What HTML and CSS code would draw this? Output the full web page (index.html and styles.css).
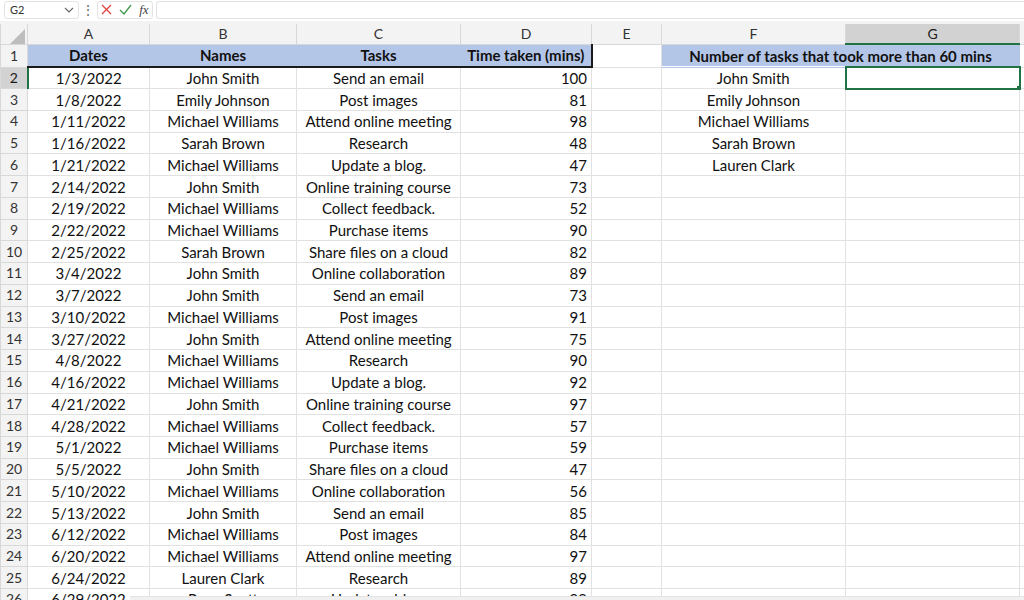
FILE: index.html
```html
<!DOCTYPE html>
<html lang="en">

<head>
    <meta charset="UTF-8" />
    <title>Task Log</title>
    <link rel="stylesheet" href="styles.css">
</head>

<body>
    <div class="formula-bar">
        <div class="name-box">
            <span>G2</span>
            <svg width="10" height="6" viewBox="0 0 10 6"><path d="M1 1l4 4 4-4" fill="none" stroke="#666" stroke-width="1.1" /></svg>
        </div>
        <div class="dots">⋮</div>
        <div class="fx-tools">
            <svg width="11" height="11" viewBox="0 0 11 11"><path d="M1 1l9 9M10 1l-9 9" stroke="#e0443e" stroke-width="1.3" /></svg>
            <svg width="13" height="11" viewBox="0 0 13 11"><path d="M1 6l4 4 7-9" fill="none" stroke="#3c9a4e" stroke-width="1.3" /></svg>
            <span class="fx">fx</span>
        </div>
        <div class="formula-input"></div>
    </div>

    <div class="sheet">
        <table class="grid">
            <colgroup>
                <col class="c-rowhead">
                <col class="c-a">
                <col class="c-b">
                <col class="c-c">
                <col class="c-d">
                <col class="c-e">
                <col class="c-f">
                <col class="c-g">
                <col>
            </colgroup>
            <thead>
                <tr class="col-heads">
                    <th class="corner"><svg width="16" height="16" viewBox="0 0 16 16"><path d="M16 1v15H1z" fill="#bdbdbd" /></svg></th>
                    <th>A</th>
                    <th>B</th>
                    <th>C</th>
                    <th>D</th>
                    <th>E</th>
                    <th>F</th>
                    <th class="active-col">G</th>
                    <th></th>
                </tr>
            </thead>
            <tbody>
                <tr class="title-row">
                    <th>1</th>
                    <td class="fill bottom-edge">Dates</td>
                    <td class="fill bottom-edge">Names</td>
                    <td class="fill bottom-edge">Tasks</td>
                    <td class="fill bottom-edge right-edge">Time taken (mins)</td>
                    <td></td>
                    <td class="fill" colspan="2">Number of tasks that took more than 60 mins</td>
                    <td></td>
                </tr>
                <tr>
                    <th class="active-row">2</th>
                    <td>1/3/2022</td><td>John Smith</td><td>Send an email</td><td class="num">100</td>
                    <td></td><td>John Smith</td><td class="selected"><span class="handle"></span></td><td></td>
                </tr>
                <tr>
                    <th>3</th>
                    <td>1/8/2022</td><td>Emily Johnson</td><td>Post images</td><td class="num">81</td>
                    <td></td><td>Emily Johnson</td><td></td><td></td>
                </tr>
                <tr>
                    <th>4</th>
                    <td>1/11/2022</td><td>Michael Williams</td><td>Attend online meeting</td><td class="num">98</td>
                    <td></td><td>Michael Williams</td><td></td><td></td>
                </tr>
                <tr>
                    <th>5</th>
                    <td>1/16/2022</td><td>Sarah Brown</td><td>Research</td><td class="num">48</td>
                    <td></td><td>Sarah Brown</td><td></td><td></td>
                </tr>
                <tr>
                    <th>6</th>
                    <td>1/21/2022</td><td>Michael Williams</td><td>Update a blog.</td><td class="num">47</td>
                    <td></td><td>Lauren Clark</td><td></td><td></td>
                </tr>
                <tr>
                    <th>7</th>
                    <td>2/14/2022</td><td>John Smith</td><td>Online training course</td><td class="num">73</td>
                    <td></td><td></td><td></td><td></td>
                </tr>
                <tr>
                    <th>8</th>
                    <td>2/19/2022</td><td>Michael Williams</td><td>Collect feedback.</td><td class="num">52</td>
                    <td></td><td></td><td></td><td></td>
                </tr>
                <tr>
                    <th>9</th>
                    <td>2/22/2022</td><td>Michael Williams</td><td>Purchase items</td><td class="num">90</td>
                    <td></td><td></td><td></td><td></td>
                </tr>
                <tr>
                    <th>10</th>
                    <td>2/25/2022</td><td>Sarah Brown</td><td>Share files on a cloud</td><td class="num">82</td>
                    <td></td><td></td><td></td><td></td>
                </tr>
                <tr>
                    <th>11</th>
                    <td>3/4/2022</td><td>John Smith</td><td>Online collaboration</td><td class="num">89</td>
                    <td></td><td></td><td></td><td></td>
                </tr>
                <tr>
                    <th>12</th>
                    <td>3/7/2022</td><td>John Smith</td><td>Send an email</td><td class="num">73</td>
                    <td></td><td></td><td></td><td></td>
                </tr>
                <tr>
                    <th>13</th>
                    <td>3/10/2022</td><td>Michael Williams</td><td>Post images</td><td class="num">91</td>
                    <td></td><td></td><td></td><td></td>
                </tr>
                <tr>
                    <th>14</th>
                    <td>3/27/2022</td><td>John Smith</td><td>Attend online meeting</td><td class="num">75</td>
                    <td></td><td></td><td></td><td></td>
                </tr>
                <tr>
                    <th>15</th>
                    <td>4/8/2022</td><td>Michael Williams</td><td>Research</td><td class="num">90</td>
                    <td></td><td></td><td></td><td></td>
                </tr>
                <tr>
                    <th>16</th>
                    <td>4/16/2022</td><td>Michael Williams</td><td>Update a blog.</td><td class="num">92</td>
                    <td></td><td></td><td></td><td></td>
                </tr>
                <tr>
                    <th>17</th>
                    <td>4/21/2022</td><td>John Smith</td><td>Online training course</td><td class="num">97</td>
                    <td></td><td></td><td></td><td></td>
                </tr>
                <tr>
                    <th>18</th>
                    <td>4/28/2022</td><td>Michael Williams</td><td>Collect feedback.</td><td class="num">57</td>
                    <td></td><td></td><td></td><td></td>
                </tr>
                <tr>
                    <th>19</th>
                    <td>5/1/2022</td><td>Michael Williams</td><td>Purchase items</td><td class="num">59</td>
                    <td></td><td></td><td></td><td></td>
                </tr>
                <tr>
                    <th>20</th>
                    <td>5/5/2022</td><td>John Smith</td><td>Share files on a cloud</td><td class="num">47</td>
                    <td></td><td></td><td></td><td></td>
                </tr>
                <tr>
                    <th>21</th>
                    <td>5/10/2022</td><td>Michael Williams</td><td>Online collaboration</td><td class="num">56</td>
                    <td></td><td></td><td></td><td></td>
                </tr>
                <tr>
                    <th>22</th>
                    <td>5/13/2022</td><td>John Smith</td><td>Send an email</td><td class="num">85</td>
                    <td></td><td></td><td></td><td></td>
                </tr>
                <tr>
                    <th>23</th>
                    <td>6/12/2022</td><td>Michael Williams</td><td>Post images</td><td class="num">84</td>
                    <td></td><td></td><td></td><td></td>
                </tr>
                <tr>
                    <th>24</th>
                    <td>6/20/2022</td><td>Michael Williams</td><td>Attend online meeting</td><td class="num">97</td>
                    <td></td><td></td><td></td><td></td>
                </tr>
                <tr>
                    <th>25</th>
                    <td>6/24/2022</td><td>Lauren Clark</td><td>Research</td><td class="num">89</td>
                    <td></td><td></td><td></td><td></td>
                </tr>
                <tr>
                    <th>26</th>
                    <td>6/29/2022</td><td>Ryan Scott</td><td>Update a blog.</td><td class="num">99</td>
                    <td></td><td></td><td></td><td></td>
                </tr>
            </tbody>
        </table>
    </div>

    <div class="h-scroll"></div>
</body>

</html>
```

FILE: styles.css
```css
* {
    box-sizing: border-box;
}

body {
    margin: 0;
    width: 1024px;
    height: 600px;
    overflow: hidden;
    background: #fff;
    font-family: Lato, 'Open Sans', sans-serif;
    color: #111;
}

/* Formula bar */
.formula-bar {
    height: 24px;
    display: flex;
    align-items: center;
    gap: 3px;
    padding: 1px 0 3px 4px;
    background: #fff;
    border-bottom: 3px solid #f3f3f3;
}

.name-box {
    width: 75px;
    height: 18px;
    display: flex;
    align-items: center;
    justify-content: space-between;
    padding: 0 4px 0 5px;
    border: 1px solid #e3e3e3;
    border-radius: 3px;
    font-size: 11px;
    color: #333;
}

.dots {
    width: 12px;
    text-align: center;
    font-size: 12px;
    color: #555;
}

.fx-tools {
    width: 56px;
    height: 18px;
    display: flex;
    align-items: center;
    justify-content: space-around;
    border: 1px solid #e3e3e3;
    border-radius: 3px;
}

.fx {
    font-family: 'Liberation Serif', serif;
    font-style: italic;
    font-size: 13px;
    color: #444;
}

.formula-input {
    flex: 1;
    height: 18px;
    border: 1px solid #e3e3e3;
    border-right: none;
    border-radius: 3px 0 0 3px;
}

/* Sheet grid */
.sheet {
    height: 576px;
    overflow: hidden;
}

.grid {
    border-collapse: collapse;
    table-layout: fixed;
    width: 1040px;
    font-size: 15px;
}

.c-rowhead { width: 27px; }
.c-a { width: 122px; }
.c-b { width: 147px; }
.c-c { width: 164px; }
.c-d { width: 131px; }
.c-e { width: 70px; }
.c-f { width: 184px; }
.c-g { width: 174px; }

.grid td,
.grid th {
    height: 21.74px;
    padding: 0 4px;
    border: 1px solid #e1e1e1;
    white-space: nowrap;
    overflow: hidden;
    text-align: center;
    font-weight: normal;
    line-height: 20px;
}

.grid .col-heads th {
    height: 20px;
    background: #f3f3f3;
    border-color: #d8d8d8;
    border-top: none;
    color: #333;
    font-size: 14px;
    line-height: 19px;
}

.grid .col-heads .corner {
    padding: 2px 2px 0 0;
    text-align: right;
    vertical-align: bottom;
    line-height: 0;
}

.grid .col-heads .active-col {
    background: #d2d2d2;
    border-bottom: 2px solid #217346;
    color: #1a1a1a;
}

.grid tbody th {
    background: #f3f3f3;
    border-color: #d8d8d8;
    color: #333;
    font-size: 14px;
    padding: 0;
}

.grid tbody th.active-row {
    background: #d2d2d2;
    border-right: 2px solid #217346;
    color: #1a1a1a;
}

.grid .title-row td,
.grid .title-row th {
    height: 23px;
}

.grid .title-row td {
    font-weight: bold;
}

.grid .fill {
    background: #b4c6e7;
    border-color: #b4c6e7;
}

.grid .bottom-edge {
    border-bottom: 2px solid #1a1a1a;
}

.grid .right-edge {
    border-right: 2px solid #1a1a1a;
}

.grid .num {
    text-align: right;
}

.grid .selected {
    position: relative;
    border: 2px solid #217346;
}

.handle {
    position: absolute;
    right: -3px;
    bottom: -3px;
    width: 6px;
    height: 6px;
    background: #217346;
    border: 1px solid #fff;
}

.h-scroll {
    position: fixed;
    left: 130px;
    right: 0;
    bottom: 0;
    height: 4px;
    background: #f0f0f0;
    border-top: 1px solid #e4e4e4;
}
```
